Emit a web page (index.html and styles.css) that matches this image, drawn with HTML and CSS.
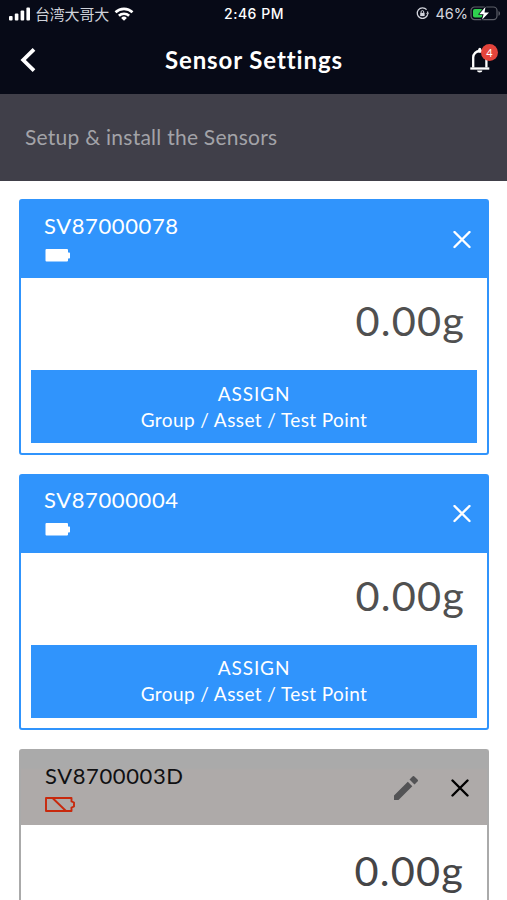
FILE: index.html
```
<!DOCTYPE html>
<html lang="en">
<head>
<meta charset="utf-8">
<title>Sensor Settings</title>
<link rel="stylesheet" href="styles.css">
</head>
<body>
<header class="top">
  <div class="status">
    <div class="carrier">
      <svg width="22" height="14" viewBox="0 0 22 14" fill="#fff"><rect x="0" y="9" width="3.6" height="4.4" rx="1"/><rect x="5.8" y="6.6" width="3.6" height="6.8" rx="1"/><rect x="11.6" y="3.6" width="3.6" height="9.8" rx="1"/><rect x="17.4" y="0.4" width="3.6" height="13" rx="1"/></svg>
      <span class="carrier-name">台湾大哥大</span>
      <svg class="wifi" width="20" height="14" viewBox="0 0 20 14" fill="none" stroke="#fff" stroke-width="2.6"><path d="M1.5 5.3a12.2 12.2 0 0 1 17 0"/><path d="M4.9 8.8a7.3 7.3 0 0 1 10.2 0"/><path d="M10 13.8 7.1 10.9a4.2 4.2 0 0 1 5.8 0z" fill="#fff" stroke="none"/></svg>
    </div>
    <span class="clock">2:46 PM</span>
    <div class="power">
      <svg width="13" height="13" viewBox="0 0 13 13" fill="none" stroke="#d4d6de" stroke-width="1.3"><path d="M10.6 2.7a5.3 5.3 0 1 0 1.1 4.7M11.8 6.5a5.3 5.3 0 0 0-.4-2"/><path d="M10 6.2h3l-1.4 1.9z" fill="#d4d6de" stroke="none"/><rect x="4.2" y="5.9" width="4.4" height="3.2" fill="#d4d6de" stroke="none"/><path d="M5.1 6V4.9a1.3 1.3 0 0 1 2.6 0V6" stroke-width="1"/></svg>
      <span class="percent">46%</span>
      <svg width="31" height="15" viewBox="0 0 31 15"><rect x="1" y="1" width="26" height="12.6" rx="3.6" fill="none" stroke="#5e6069" stroke-width="1.2"/><path d="M28.5 5c2 .8 2 4 0 4.8z" fill="#5e6069"/><rect x="3" y="3" width="9.5" height="8.6" rx="1.8" fill="#2fd14f"/><path d="M15.5 0.8 9.2 8.2h4.4L12 13.8 19 6.4h-4.5z" fill="#fff" stroke="#070a17" stroke-width="1.6" paint-order="stroke" stroke-linejoin="round"/></svg>
    </div>
  </div>
  <div class="nav">
    <svg class="back" width="18" height="26" viewBox="0 0 18 26" fill="none" stroke="#fff" stroke-width="3.8"><path d="M14 2.3 3.2 13 14 23.7"/></svg>
    <h1 class="title">Sensor Settings</h1>
    <div class="alerts">
      <svg width="22" height="26" viewBox="0 0 22 26" fill="none" stroke="#fff" stroke-width="2.3"><path d="M4.200 20.500V10.600a6.600 6.600 0 0 1 13.200 0v9.900"/><path d="M1.300 21.500h19"/><path d="M10.800 2.200v2" stroke-width="3" stroke-linecap="round"/><path d="M8 23.400h5.400a2.700 2 0 0 1-5.400 0z" fill="#fff" stroke="none"/></svg>
      <span class="badge">4</span>
    </div>
  </div>
</header>
<div class="intro"><span>Setup &amp; install the Sensors</span></div>
<main class="list">
  <section class="card">
    <div class="card-head">
      <div class="ident">
        <span class="serial">SV87000078</span>
        <svg class="battery" width="26" height="13" viewBox="0 0 26 13" fill="#fff"><path d="M1.500 0h20.500q1 0 1 1v2.500h1.200q.8 0 .8.800v4.400q0 .8-.8.800H23V11.500q0 1-1 1H1.500q-1 0-1-1V1q0-1 1-1z"/></svg>
      </div>
      <svg class="close" width="18" height="18" viewBox="0 0 18 18" stroke="currentColor" stroke-width="2.4" stroke-linecap="round"><path d="M1.500 1l15 15M16.500 1l-15 15"/></svg>
    </div>
    <div class="reading">0.00g</div>
    <div class="assign"><span class="verb">ASSIGN</span><span class="scope">Group / Asset / Test Point</span></div>
  </section>
  <section class="card">
    <div class="card-head">
      <div class="ident">
        <span class="serial">SV87000004</span>
        <svg class="battery" width="26" height="13" viewBox="0 0 26 13" fill="#fff"><path d="M1.500 0h20.500q1 0 1 1v2.500h1.200q.8 0 .8.800v4.400q0 .8-.8.800H23V11.500q0 1-1 1H1.500q-1 0-1-1V1q0-1 1-1z"/></svg>
      </div>
      <svg class="close" width="18" height="18" viewBox="0 0 18 18" stroke="currentColor" stroke-width="2.4" stroke-linecap="round"><path d="M1.500 1l15 15M16.500 1l-15 15"/></svg>
    </div>
    <div class="reading">0.00g</div>
    <div class="assign"><span class="verb">ASSIGN</span><span class="scope">Group / Asset / Test Point</span></div>
  </section>
  <section class="card assigned">
    <div class="card-head">
      <div class="ident">
        <span class="serial">SV8700003D</span>
        <svg class="battery" width="30" height="15" viewBox="0 0 30 15" fill="none" stroke="#c8290d" stroke-width="1.9" stroke-linejoin="round"><path d="M1 1h25.500v3.400l2.500 1.100v4l-2.500 1.100V14H1zM7.500 1 21 14"/></svg>
      </div>
      <svg class="edit" width="24" height="24" viewBox="0 0 24 24" fill="#535355"><path d="M0 19.500v4.500h4.500L18.300 10.200l-4.500-4.500zM23.500 5.500a1.300 1.300 0 0 0 0-1.900L20.400.5a1.300 1.300 0 0 0-1.900 0l-3 3 5 5z"/></svg>
      <svg class="close" width="18" height="18" viewBox="0 0 18 18" stroke="currentColor" stroke-width="2.4" stroke-linecap="round"><path d="M1.500 1.500l15 15M16.500 1.500l-15 15"/></svg>
    </div>
    <div class="reading">0.00g</div>
  </section>
</main>
</body>
</html>
```
FILE: styles.css
```
* { box-sizing: border-box; }
body {
  display: flex;
  flex-direction: column;
  margin: 0;
  height: 900px;
  overflow: hidden;
  background: #fff;
  color: #fff;
  font-family: Lato, "Noto Sans CJK TC", sans-serif;
  font-variant-ligatures: none;
}
svg { display: block; flex: none; }

.top { flex: none; height: 94px; background: #070a17; }
.status {
  display: grid;
  grid-template-columns: 1fr auto 1fr;
  align-items: center;
  height: 27px;
  padding: 0 6px 0 9px;
  font-family: Inter, "Noto Sans CJK TC", sans-serif;
}
.carrier { display: flex; align-items: center; }
.carrier-name {
  margin-left: 4px;
  color: #cfd2da;
  font: 15px/20px "Noto Sans CJK TC", sans-serif;
  letter-spacing: -0.2px;
}
.wifi { margin-left: 5px; }
.clock { margin-right: 2px; font-size: 14px; font-weight: 500; letter-spacing: 0.5px; }
.power { display: flex; align-items: center; justify-content: flex-end; }
.percent { margin: 0 2px 0 6px; font-size: 14.5px; color: #d4d6de; }

.nav {
  display: flex;
  align-items: center;
  justify-content: space-between;
  height: 65px;
  padding: 0 16px 0 20px;
}
.title { margin: 0 0 0 1px; font-size: 24px; font-weight: 700; line-height: 30px; letter-spacing: 0.9px; }
.alerts { position: relative; }
.badge {
  position: absolute;
  top: -3px;
  left: 12px;
  width: 17px;
  height: 17px;
  border-radius: 50%;
  background: #e4443c;
  font: 11px/17px Lato, sans-serif;
  text-align: center;
}

.intro {
  display: flex;
  flex: none;
  align-items: center;
  height: 87px;
  padding: 0 0 2px 25px;
  background: #403f49;
  color: #a3a3a8;
  font-size: 21px;
  letter-spacing: 0.25px;
}

.list {
  display: flex;
  flex: 1;
  flex-direction: column;
  gap: 18.6px;
  min-height: 0;
  padding: 18px 18px 0 19px;
}
.card {
  flex: none;
  height: 256px;
  border: 2px solid #3094fc;
  border-radius: 3px;
  background: #fff;
}
.card-head {
  display: flex;
  align-items: center;
  height: 77px;
  padding: 0 16px 0 23px;
  background: #3094fc;
}
.ident { display: flex; flex: 1; flex-direction: column; align-items: flex-start; padding-bottom: 5px; }
.serial { font-size: 22px; line-height: 26px; letter-spacing: 0.6px; }
.battery { margin: 10px 0 0 1px; }
.reading {
  height: 92px;
  padding: 17px 22px 0 0;
  color: #505050;
  font-size: 41.5px;
  line-height: 50px;
  letter-spacing: 1.2px;
  text-align: right;
}
.assign {
  display: flex;
  flex-direction: column;
  align-items: center;
  justify-content: center;
  height: 73px;
  margin: 0 10px;
  background: #3094fc;
  font-size: 19px;
  line-height: 26px;
}
.verb { letter-spacing: 0.9px; }
.scope { letter-spacing: 0.4px; }

.assigned {
  flex: 1;
  height: auto;
  margin-top: 1px;
  border-color: #aaa;
  border-bottom: 0;
  border-radius: 3px 3px 0 0;
}
.assigned .card-head {
  height: 74px;
  padding: 0 18px 0 24px;
  background: linear-gradient(#aaa 0 17px, #aeaaa9 19px);
  color: #101012;
}
.assigned .ident { padding-bottom: 2px; }
.assigned .battery { margin: 8px 0 0; }
.assigned .edit { margin-right: 33px; }
.assigned .close { color: #000; }
.assigned .reading { height: auto; padding: 20px 23px 0 0; color: #454547; }
```
